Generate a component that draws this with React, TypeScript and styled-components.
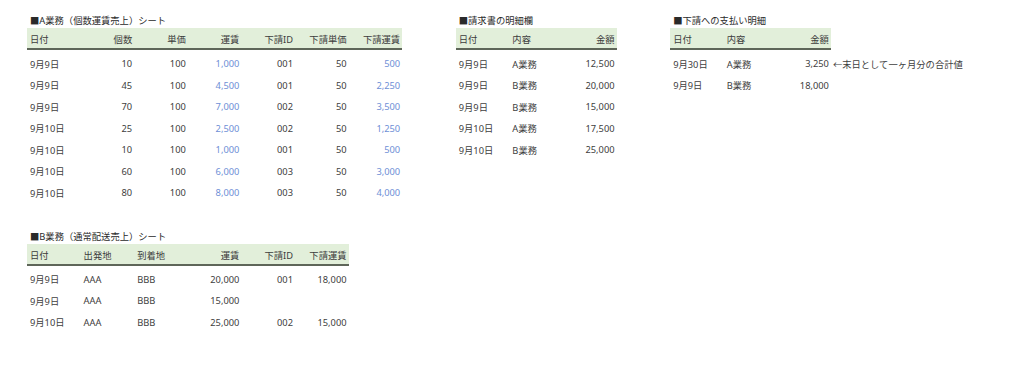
import { FC, Fragment } from "react";
import styled, { createGlobalStyle } from "styled-components";

const COL = 53.6;

const Global = createGlobalStyle`
  html, body {
    margin: 0;
    background: #ffffff;
  }
  body {
    font-family: "Noto Sans", "Noto Sans CJK JP", sans-serif;
    font-size: 9.3px;
    color: #404040;
  }
`;

const Page = styled.div`
  width: 1024px;
  height: 366px;
  box-sizing: border-box;
  padding: 14px 0 0 27px;
  display: flex;
  flex-direction: column;
  align-items: flex-start;
  gap: 26px;
`;

const TopRow = styled.div`
  display: flex;
  align-items: flex-start;
  gap: ${COL}px;
`;

const Section = styled.section`
  display: flex;
  flex-direction: column;
  align-items: flex-start;
`;

const Title = styled.div`
  height: 14px;
  line-height: 14px;
  padding-left: 3px;
  white-space: nowrap;
  color: #2a2a2a;
`;

const Grid = styled.div<{ $cols: number; $extra?: boolean }>`
  display: grid;
  grid-template-columns: repeat(${(p) => p.$cols}, ${COL}px) ${(p) => (p.$extra ? "auto" : "")};
  grid-auto-rows: 21.5px;
`;

const Head = styled.div<{ $cols: number }>`
  display: grid;
  grid-template-columns: repeat(${(p) => p.$cols}, ${COL}px);
  height: 20px;
  background: #e2efda;
  border-bottom: 2px solid #5e6659;
  margin-bottom: 3px;
`;

const HeadCell = styled.div<{ $right?: boolean }>`
  display: flex;
  align-items: flex-end;
  justify-content: ${(p) => (p.$right ? "flex-end" : "flex-start")};
  padding: 0 2px 2px 3px;
  white-space: nowrap;
  color: #3c3c3c;
`;

const Cell = styled.div<{ $right?: boolean; $blue?: boolean }>`
  display: flex;
  align-items: center;
  justify-content: ${(p) => (p.$right ? "flex-end" : "flex-start")};
  padding: 0 2px 0 3px;
  white-space: nowrap;
  color: ${(p) => (p.$blue ? "#6e8fd6" : "#404040")};
`;

const Note = styled.div`
  display: flex;
  align-items: center;
  padding-left: 2px;
  white-space: nowrap;
  font-family: "Noto Sans CJK JP", sans-serif;
  color: #404040;
`;

type Col = { label: string; right?: boolean; blue?: boolean };

type TableProps = {
  title: string;
  cols: Col[];
  rows: string[][];
  notes?: (string | undefined)[];
};

const SheetTable: FC<TableProps> = ({ title, cols, rows, notes }) => (
  <Section>
    <Title>{title}</Title>
    <Head $cols={cols.length}>
      {cols.map((c) => (
        <HeadCell key={c.label} $right={c.right}>
          {c.label}
        </HeadCell>
      ))}
    </Head>
    <Grid $cols={cols.length} $extra={!!notes}>
      {rows.map((r, i) => (
        <Fragment key={i}>
          {r.map((v, j) => (
            <Cell key={j} $right={cols[j].right} $blue={cols[j].blue}>
              {v}
            </Cell>
          ))}
          {notes && <Note>{notes[i] ?? ""}</Note>}
        </Fragment>
      ))}
    </Grid>
  </Section>
);

const aCols: Col[] = [
  { label: "日付" },
  { label: "個数", right: true },
  { label: "単価", right: true },
  { label: "運賃", right: true, blue: true },
  { label: "下請ID", right: true },
  { label: "下請単価", right: true },
  { label: "下請運賃", right: true, blue: true },
];

const aRows = [
  ["9月9日", "10", "100", "1,000", "001", "50", "500"],
  ["9月9日", "45", "100", "4,500", "001", "50", "2,250"],
  ["9月9日", "70", "100", "7,000", "002", "50", "3,500"],
  ["9月10日", "25", "100", "2,500", "002", "50", "1,250"],
  ["9月10日", "10", "100", "1,000", "001", "50", "500"],
  ["9月10日", "60", "100", "6,000", "003", "50", "3,000"],
  ["9月10日", "80", "100", "8,000", "003", "50", "4,000"],
];

const billCols: Col[] = [{ label: "日付" }, { label: "内容" }, { label: "金額", right: true }];

const billRows = [
  ["9月9日", "A業務", "12,500"],
  ["9月9日", "B業務", "20,000"],
  ["9月9日", "B業務", "15,000"],
  ["9月10日", "A業務", "17,500"],
  ["9月10日", "B業務", "25,000"],
];

const payRows = [
  ["9月30日", "A業務", "3,250"],
  ["9月9日", "B業務", "18,000"],
];

const bCols: Col[] = [
  { label: "日付" },
  { label: "出発地" },
  { label: "到着地" },
  { label: "運賃", right: true },
  { label: "下請ID", right: true },
  { label: "下請運賃", right: true },
];

const bRows = [
  ["9月9日", "AAA", "BBB", "20,000", "001", "18,000"],
  ["9月9日", "AAA", "BBB", "15,000", "", ""],
  ["9月10日", "AAA", "BBB", "25,000", "002", "15,000"],
];

const App: FC = () => (
  <>
    <Global />
    <Page>
      <TopRow>
        <SheetTable title="■A業務（個数運賃売上）シート" cols={aCols} rows={aRows} />
        <SheetTable title="■請求書の明細欄" cols={billCols} rows={billRows} />
        <SheetTable
          title="■下請への支払い明細"
          cols={billCols}
          rows={payRows}
          notes={["←末日として一ヶ月分の合計値"]}
        />
      </TopRow>
      <SheetTable title="■B業務（通常配送売上）シート" cols={bCols} rows={bRows} />
    </Page>
  </>
);

export default App;
